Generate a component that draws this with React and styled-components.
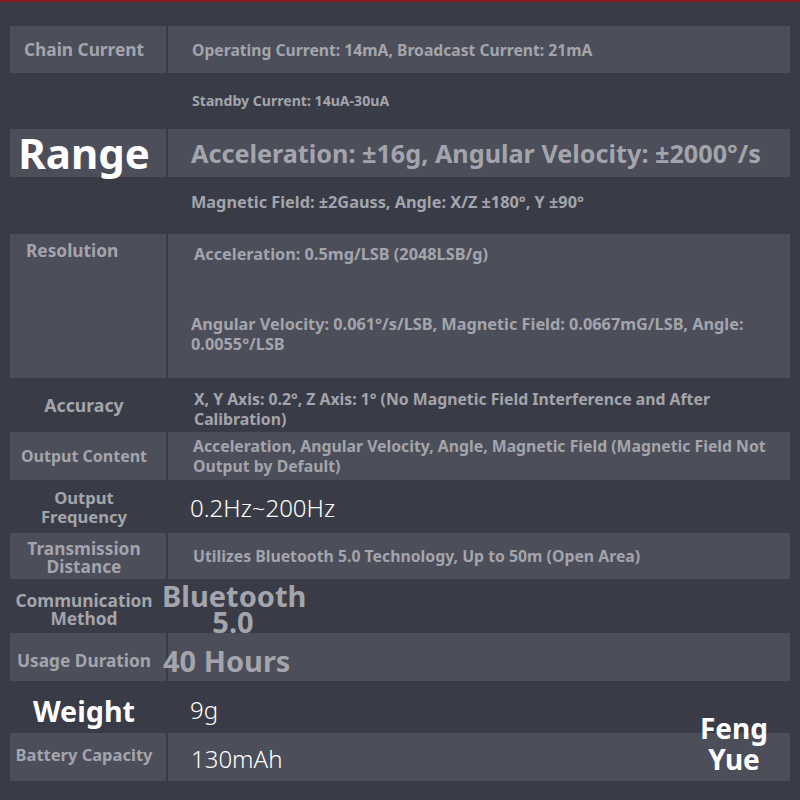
import React from 'react';
import styled, { createGlobalStyle } from 'styled-components';

const GlobalStyle = createGlobalStyle`
    body {
        margin: 0;
        background: #393c46;
    }
`;

const shade = '#4c4e5a';
const grey = '#a4a5ac';

const Page = styled.div`
    position: relative;
    box-sizing: border-box;
    width: 800px;
    height: 800px;
    padding: 24px 9px 0 10px;
    background: #393c46;
    border-top: 2px solid #8c1c22;
    border-right: 1px solid #8c1c22;
    font-family: "Noto Sans", "Open Sans", sans-serif;
    overflow: hidden;
`;

const Table = styled.div`
    display: flex;
    flex-direction: column;
`;

const Row = styled.div`
    display: flex;
    gap: 2px;
    height: ${p => p.$h}px;
`;

const Label = styled.div`
    flex: none;
    box-sizing: border-box;
    width: 156px;
    display: flex;
    align-items: ${p => (p.$top ? 'flex-start' : 'center')};
    justify-content: ${p => (p.$top ? 'flex-start' : 'center')};
    padding: ${p => p.$pad || (p.$top ? '7px 0 0 16px' : '0 8px 0 0')};
    background: ${p => (p.$shaded ? shade : 'transparent')};
    color: ${p => (p.$white ? '#ffffff' : grey)};
    font-size: ${p => p.$size || 17.3}px;
    font-weight: 700;
    line-height: ${p => p.$lh || 19}px;
    text-align: center;
    white-space: nowrap;
`;

const Value = styled.div`
    flex: 1;
    box-sizing: border-box;
    display: flex;
    flex-direction: column;
    justify-content: ${p => (p.$top ? 'flex-start' : 'center')};
    padding: ${p => p.$pad || '0 16px 0 24px'};
    background: ${p => (p.$shaded ? shade : 'transparent')};
    color: ${grey};
    font-size: ${p => p.$size || 15.8}px;
    font-weight: 700;
    line-height: 20px;
    overflow: visible;
`;

const Thin = styled.span`
    color: #ffffff;
    font-size: 24px;
    font-weight: 300;
    line-height: 28px;
`;

const Big = styled.div`
    position: relative;
    z-index: 1;
    width: ${p => p.$w || 'auto'};
    margin-left: ${p => p.$shift || 0}px;
    font-size: 29px;
    font-weight: 700;
    line-height: 26px;
    text-align: ${p => (p.$w ? 'center' : 'left')};
    white-space: nowrap;
`;

const Para = styled.div`
    margin-top: ${p => p.$mt || 0}px;
    margin-left: ${p => p.$ml || 0}px;
`;

const Stamp = styled.div`
    position: absolute;
    left: 689px;
    top: 711px;
    width: 90px;
    color: #ffffff;
    font-size: 28px;
    font-weight: 700;
    line-height: 31px;
    text-align: center;
`;

export default function App() {
    return (
        <Page>
            <GlobalStyle />
            <Table>
                <Row $h={47}>
                    <Label $shaded>Chain Current</Label>
                    <Value $shaded $size={15.7}>Operating Current: 14mA, Broadcast Current: 21mA</Value>
                </Row>
                <Row $h={56}>
                    <Label />
                    <Value $size={14.1}>Standby Current: 14uA-30uA</Value>
                </Row>
                <Row $h={48}>
                    <Label $shaded $white $size={42} $lh={44}>Range</Label>
                    <Value $shaded $size={25.2} $pad="0 0 0 23px">
                        Acceleration: ±16g, Angular Velocity: ±2000°/s
                    </Value>
                </Row>
                <Row $h={57}>
                    <Label />
                    <Value $size={16.3} $pad="0 16px 8px 23px">
                        Magnetic Field: ±2Gauss, Angle: X/Z ±180°, Y ±90°
                    </Value>
                </Row>
                <Row $h={144}>
                    <Label $shaded $top>Resolution</Label>
                    <Value $shaded $top $size={16.3} $pad="10px 30px 0 26px">
                        <Para>Acceleration: 0.5mg/LSB (2048LSB/g)</Para>
                        <Para $mt={50} $ml={-3}>
                            Angular Velocity: 0.061°/s/LSB, Magnetic Field: 0.0667mG/LSB, Angle: 0.0055°/LSB
                        </Para>
                    </Value>
                </Row>
                <Row $h={54}>
                    <Label $size={17.7}>Accuracy</Label>
                    <Value $pad="8px 60px 0 26px">
                        X, Y Axis: 0.2°, Z Axis: 1° (No Magnetic Field Interference and After Calibration)
                    </Value>
                </Row>
                <Row $h={48}>
                    <Label $shaded $size={16}>Output Content</Label>
                    <Value $shaded $pad="0 16px 0 25px">
                        Acceleration, Angular Velocity, Angle, Magnetic Field (Magnetic Field Not Output by Default)
                    </Value>
                </Row>
                <Row $h={53}>
                    <Label $size={16.6}>Output<br />Frequency</Label>
                    <Value $pad="2px 16px 0 22px"><Thin>0.2Hz~200Hz</Thin></Value>
                </Row>
                <Row $h={46}>
                    <Label $shaded $lh={18} $pad="3px 8px 0 0">Transmission<br />Distance</Label>
                    <Value $shaded $pad="0 16px 0 25px">
                        Utilizes Bluetooth 5.0 Technology, Up to 50m (Open Area)
                    </Value>
                </Row>
                <Row $h={54}>
                    <Label $lh={18} $pad="8px 8px 0 0">Communication<br />Method</Label>
                    <Value $pad="6px 0 0 0">
                        <Big $w="142px" $shift={-6}>Bluetooth<br />5.0</Big>
                    </Value>
                </Row>
                <Row $h={48}>
                    <Label $shaded $pad="6px 8px 0 0">Usage Duration</Label>
                    <Value $shaded $pad="8px 0 0 0">
                        <Big $shift={-5}>40 Hours</Big>
                    </Value>
                </Row>
                <Row $h={52}>
                    <Label $white $size={28.7} $lh={30} $pad="7px 8px 0 0">Weight</Label>
                    <Value $pad="6px 16px 0 22px"><Thin>9g</Thin></Value>
                </Row>
                <Row $h={48}>
                    <Label $shaded $size={16.5} $pad="0 8px 6px 0">Battery Capacity</Label>
                    <Value $shaded $pad="4px 16px 0 23px"><Thin>130mAh</Thin></Value>
                </Row>
            </Table>
            <Stamp>Feng<br />Yue</Stamp>
        </Page>
    );
}
